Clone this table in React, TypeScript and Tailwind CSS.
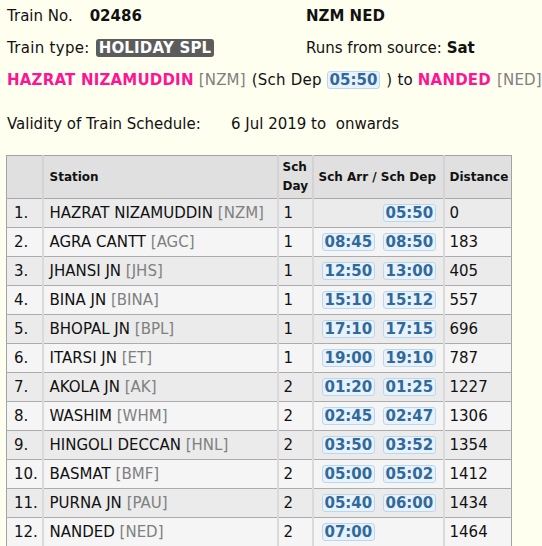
import React from "react";

type Stop = {
  name: string;
  code: string;
  day: number;
  arr?: string;
  dep?: string;
  dist: number;
};

const stops: Stop[] = [
  { name: "HAZRAT NIZAMUDDIN", code: "NZM", day: 1, dep: "05:50", dist: 0 },
  { name: "AGRA CANTT", code: "AGC", day: 1, arr: "08:45", dep: "08:50", dist: 183 },
  { name: "JHANSI JN", code: "JHS", day: 1, arr: "12:50", dep: "13:00", dist: 405 },
  { name: "BINA JN", code: "BINA", day: 1, arr: "15:10", dep: "15:12", dist: 557 },
  { name: "BHOPAL JN", code: "BPL", day: 1, arr: "17:10", dep: "17:15", dist: 696 },
  { name: "ITARSI JN", code: "ET", day: 1, arr: "19:00", dep: "19:10", dist: 787 },
  { name: "AKOLA JN", code: "AK", day: 2, arr: "01:20", dep: "01:25", dist: 1227 },
  { name: "WASHIM", code: "WHM", day: 2, arr: "02:45", dep: "02:47", dist: 1306 },
  { name: "HINGOLI DECCAN", code: "HNL", day: 2, arr: "03:50", dep: "03:52", dist: 1354 },
  { name: "BASMAT", code: "BMF", day: 2, arr: "05:00", dep: "05:02", dist: 1412 },
  { name: "PURNA JN", code: "PAU", day: 2, arr: "05:40", dep: "06:00", dist: 1434 },
  { name: "NANDED", code: "NED", day: 2, arr: "07:00", dist: 1464 },
];

const Time = ({ t }: { t: string }) => (
  <span className="inline-block rounded-[3px] border border-[#bcd6ee] bg-[#e7f2fc] px-[2px] text-[15px] leading-[16px] font-bold tracking-normal text-[#31699b]">
    {t}
  </span>
);

const App = () => {
  return (
    <div className="min-h-screen w-full bg-[#fffff0] font-['Verdana','DejaVu_Sans',sans-serif] text-[15px] text-[#111] px-[7px]">
      {/* train summary */}
      <div className="grid grid-cols-[299px_1fr]">
        <div className="flex h-[32px] items-center">
          <span>Train No.</span>
          <span className="ml-[17px] font-bold">02486</span>
        </div>
        <div className="flex h-[32px] items-center font-bold">NZM NED</div>
        <div className="flex h-[32px] items-center">
          <span className="tracking-[0.3px]">Train type:</span>
          <span className="ml-[6px] rounded-[3px] bg-[#5c5c5c] px-[3px] leading-[18px] font-bold tracking-[0.2px] text-white">
            HOLIDAY SPL
          </span>
        </div>
        <div className="flex h-[32px] items-center">
          Runs from source:&nbsp;<span className="font-bold">Sat</span>
        </div>
      </div>

      <div className="flex h-[32px] items-center whitespace-nowrap tracking-[0.2px]">
        <span className="font-bold text-[#ff1493]">HAZRAT NIZAMUDDIN</span>
        <span className="ml-[5px] text-[#808080]">[NZM]</span>
        <span className="ml-[6px]">(Sch Dep</span>
        <span className="ml-[5px]">
          <Time t="05:50" />
        </span>
        <span className="ml-[6px]">) to</span>
        <span className="ml-[5px] font-bold text-[#ff1493]">NANDED</span>
        <span className="ml-[6px] text-[#808080]">[NED]</span>
      </div>

      <div className="mt-[12px] flex h-[32px] items-center">
        <span className="w-[224px]">Validity of Train Schedule:</span>
        <span className="whitespace-pre">6 Jul 2019 to  onwards</span>
      </div>

      {/* schedule table */}
      <table className="mt-[15px] -ml-[1px] w-[505px] table-fixed border-collapse border border-[#a3a3a3]">
        <colgroup>
          <col className="w-[36px]" />
          <col className="w-[235px]" />
          <col className="w-[35px]" />
          <col className="w-[131px]" />
          <col className="w-[68px]" />
        </colgroup>
        <thead>
          <tr className="h-[43px] bg-[#e0e0e0] text-left text-[12px] leading-[19px] font-bold text-[#111]">
            <th className="border-r-2 border-b border-r-[#d3d3d3] border-b-[#a9a9a9]"></th>
            <th className="border-r-2 border-b border-r-[#d3d3d3] border-b-[#a9a9a9] pl-[6px] font-bold">Station</th>
            <th className="border-r-2 border-b border-r-[#d3d3d3] border-b-[#a9a9a9] pl-[4px] font-bold">
              Sch
              <br />
              Day
            </th>
            <th className="border-r-2 border-b border-r-[#d3d3d3] border-b-[#a9a9a9] pl-[5px] font-bold whitespace-nowrap">
              Sch Arr / Sch Dep
            </th>
            <th className="border-b border-b-[#a9a9a9] pl-[5px] font-bold">Distance</th>
          </tr>
        </thead>
        <tbody>
          {stops.map((s, i) => (
            <tr
              key={s.code}
              className={`h-[29px] ${i % 2 === 0 ? "bg-[#ebebeb]" : "bg-[#f5f5f5]"}`}
            >
              <td className="border-r-2 border-b border-r-[#dadada] border-b-[#acacac] pl-[7px]">{i + 1}.</td>
              <td className="border-r-2 border-b border-r-[#dadada] border-b-[#acacac] pl-[6px] whitespace-nowrap">
                {s.name} <span className="text-[#808080]">[{s.code}]</span>
              </td>
              <td className="border-r-2 border-b border-r-[#dadada] border-b-[#acacac] pl-[5px]">{s.day}</td>
              <td className="border-r-2 border-b border-r-[#dadada] border-b-[#acacac]">
                <div className="flex gap-[11px] pl-[8px]">
                  <div className="w-[50px]">{s.arr && <Time t={s.arr} />}</div>
                  <div className="w-[50px]">{s.dep && <Time t={s.dep} />}</div>
                </div>
              </td>
              <td className="border-b border-b-[#acacac] pl-[5px]">{s.dist}</td>
            </tr>
          ))}
        </tbody>
      </table>
    </div>
  );
};

export default App;
